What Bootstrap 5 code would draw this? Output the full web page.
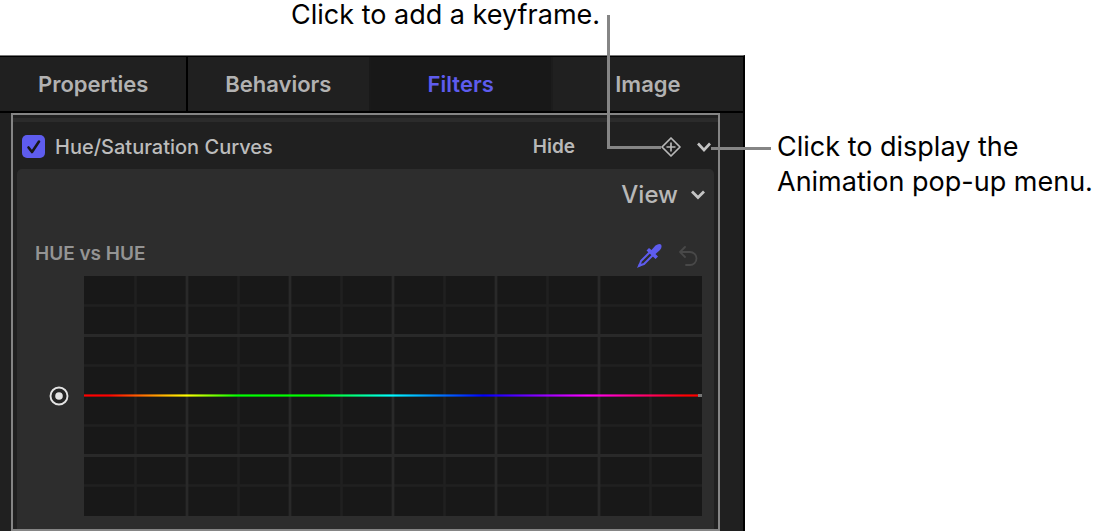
<!DOCTYPE html>
<html lang="en">
<head>
<meta charset="utf-8">
<meta name="viewport" content="width=device-width, initial-scale=1">
<title>Hue/Saturation Curves</title>
<link href="https://cdn.jsdelivr.net/npm/bootstrap@5.3.0/dist/css/bootstrap.min.css" rel="stylesheet">
<style>
body{font-family:Inter,"Liberation Sans",sans-serif;background:#fff;color:#000}
.note{font-size:27px;line-height:35px}
.note-top{height:55px;padding-left:291px;line-height:30px}
.note-side{width:363px;padding:74px 0 0 32px}
.inspector{min-width:0;background:#202020;border-top:1px solid #777;border-right:2px solid #000;color:#b4b4b4}
.tabs{border-top:1px solid #000;border-bottom:2px solid #000}
.tabs .nav-link{flex:182 1 0;height:54px;padding:0;color:#b2b2b2;font-size:22px;font-weight:600;border-radius:0;border-right:2px solid #000}
.tabs .nav-link.active{background:#181818;color:#5e5cee;border-color:#1c1c1c}
.tabs .before-active{border-color:#191919}
.tabs .nav-link:first-child{flex-grow:188}
.tabs .nav-link:last-child{flex-grow:192;border-right:0}
.frame{margin:0 23px 0 11px;border:2px solid #858585}
.strip{height:4px;margin-top:3px;background:#2b2b2b}
.filter-row{height:47px;padding:2px 7px 0 9px}
.filter-row .form-check-input{width:23px;height:23px;margin:0;border:0;border-radius:5px;background-color:#5e5cee;background-image:none}
.check{position:relative;width:23px;height:23px}
.check svg{position:absolute;inset:0;pointer-events:none}
.plain{background:none;border:0;padding:0;color:#b8b8b8;line-height:24px}
.name{font-size:20px;font-weight:500;color:#bcbcbc;margin-left:10px}
.hide{font-size:19px;font-weight:600;margin-right:86px}
.icon-btn{position:relative;display:flex;align-items:center;justify-content:center;height:24px}
.key{width:20px;margin-right:16px}
.pop{width:14px}
.leader{position:absolute;pointer-events:none}
.leader-key{right:100%;bottom:10px;width:54px;height:134px;border-left:3px solid #858585;border-bottom:3px solid #858585}
.leader-pop{left:100%;top:12px;width:60px;height:3px;background:#858585}
.curves{margin:0 4px 0 4px;padding:7px 12px 13px 18px;background:#2d2d2d;border-radius:5px 5px 0 0}
.view{font-size:24px;font-weight:500;line-height:38px;gap:13px;margin-right:-3px}
.curve-head{height:38px;margin-top:24px}
.curve-title{font-size:19px;font-weight:600;color:#949494;margin:6px 0 0;line-height:20px}
.tools{gap:16px;padding:5px 4px 0 0}
.graph{height:240px;background:#181818}
.graph svg{display:block}
.point{width:49px;flex:none;padding-left:14px}
</style>
</head>
<body>
<div class="note note-top">Click to add a keyframe.</div>
<div class="d-flex">
  <main class="inspector flex-grow-1">
    <nav class="nav tabs flex-nowrap" aria-label="Inspector">
      <a class="nav-link d-flex align-items-center justify-content-center" href="#properties">Properties</a>
      <a class="nav-link before-active d-flex align-items-center justify-content-center" href="#behaviors">Behaviors</a>
      <a class="nav-link active d-flex align-items-center justify-content-center" href="#filters" aria-current="page">Filters</a>
      <a class="nav-link d-flex align-items-center justify-content-center" href="#image">Image</a>
    </nav>
    <section class="frame">
      <div class="strip"></div>
      <div class="filter-row d-flex align-items-center">
        <div class="check">
          <input class="form-check-input" type="checkbox" id="enable" checked>
          <svg viewBox="0 0 23 23" fill="none" stroke="#171717" stroke-width="2.6" stroke-linecap="round" stroke-linejoin="round"><path d="M6.500 12.500 10 17 17 6.500"/></svg>
        </div>
        <label class="name me-auto" for="enable">Hue/Saturation Curves</label>
        <button class="plain hide" type="button">Hide</button>
        <button class="plain icon-btn key" type="button" aria-label="Add keyframe">
          <svg width="20" height="20" viewBox="0 0 20 20" fill="none" stroke="#b8b8b8" stroke-width="1.700" stroke-linejoin="round"><path d="M10 1 19 10 10 19 1 10ZM10 5.500v9M5.500 10h9"/></svg>
          <span class="leader leader-key"></span>
        </button>
        <button class="plain icon-btn pop" type="button" aria-label="Animation menu">
          <svg width="14" height="10" viewBox="0 0 14 10" fill="none" stroke="#c4c4c4" stroke-width="2.600"><path d="M1 1.500 7 8 13 1.500"/></svg>
          <span class="leader leader-pop"></span>
        </button>
      </div>
      <div class="curves">
        <div class="d-flex justify-content-end">
          <button class="plain view d-flex align-items-center" type="button">View
            <svg width="14" height="10" viewBox="0 0 14 10" fill="none" stroke="#c4c4c4" stroke-width="2.800"><path d="M1 1.500 7 7.500 13 1.500"/></svg>
          </button>
        </div>
        <div class="curve-head d-flex justify-content-between align-items-start">
          <h2 class="curve-title">HUE vs HUE</h2>
          <div class="tools d-flex">
            <button class="plain d-flex" type="button" aria-label="Pick a color">
              <svg width="26" height="26" viewBox="0 0 26 26"><path d="M14 9 5 18 3.500 22.500 8 21 17 12" fill="none" stroke="#5e5cee" stroke-width="2" stroke-linejoin="round"/><path d="M1 25 3.200 20 6 22.500Z" fill="#5e5cee"/><path d="M10.500 7.500 13 5 15.500 7 19.500 2.500Q23 0 25 1.500 26.500 4 24 7L19.500 11 22 13.500 19.500 16Z" fill="#5e5cee"/></svg>
            </button>
            <button class="plain d-flex" type="button" aria-label="Reset" disabled>
              <svg width="20" height="26" viewBox="0 0 20 26" fill="none" stroke="#484848" stroke-width="1.800" stroke-linecap="round" stroke-linejoin="round"><path d="M7 4 2 9 7 14M2 9H12A6.500 6.500 0 0 1 12 22H8"/></svg>
            </button>
          </div>
        </div>
        <div class="d-flex align-items-center">
          <div class="point">
            <button class="plain d-flex" type="button" aria-label="Add point">
              <svg width="20" height="20" viewBox="0 0 20 20"><circle cx="10" cy="10" r="8.500" fill="#262626" stroke="#e4e4e4" stroke-width="1.900"/><circle cx="10" cy="10" r="3.800" fill="#e4e4e4"/></svg>
            </button>
          </div>
          <div class="graph flex-grow-1">
            <svg width="100%" height="240" viewBox="0 0 618 240" preserveAspectRatio="none" role="img" aria-label="Hue curve">
              <defs><linearGradient id="hue"><stop offset="0" stop-color="#f00"/><stop offset=".04" stop-color="#f00"/><stop offset=".167" stop-color="#ff0"/><stop offset=".25" stop-color="#0f0"/><stop offset=".38" stop-color="#0f0"/><stop offset=".5" stop-color="#0ff"/><stop offset=".65" stop-color="#00f"/><stop offset=".82" stop-color="#f0f"/><stop offset=".98" stop-color="#f00"/></linearGradient></defs>
              <path d="M0 29.500H618M0 89.500H618M0 149.500H618M0 209.500H618M51.500 0V240M154.500 0V240M257.500 0V240M360.500 0V240M463.500 0V240M566.500 0V240" stroke="#202020" stroke-width="2.500"/>
              <path d="M0 59.500H618M0 179.500H618M103 0V240M206 0V240M309 0V240M412 0V240M515 0V240" stroke="#292929" stroke-width="2.800"/>
              <rect y="118" width="614" height="3" fill="url(#hue)" fill-opacity=".6"/><rect y="119" width="614" height="1" fill="url(#hue)"/><rect x="614" y="118" width="4" height="3" fill="#777"/>
            </svg>
          </div>
        </div>
      </div>
    </section>
  </main>
  <aside class="note note-side flex-shrink-0">Click to display the<br>Animation pop-up menu.</aside>
</div>
<script src="https://cdn.jsdelivr.net/npm/bootstrap@5.3.0/dist/js/bootstrap.bundle.min.js"></script>
</body>
</html>
